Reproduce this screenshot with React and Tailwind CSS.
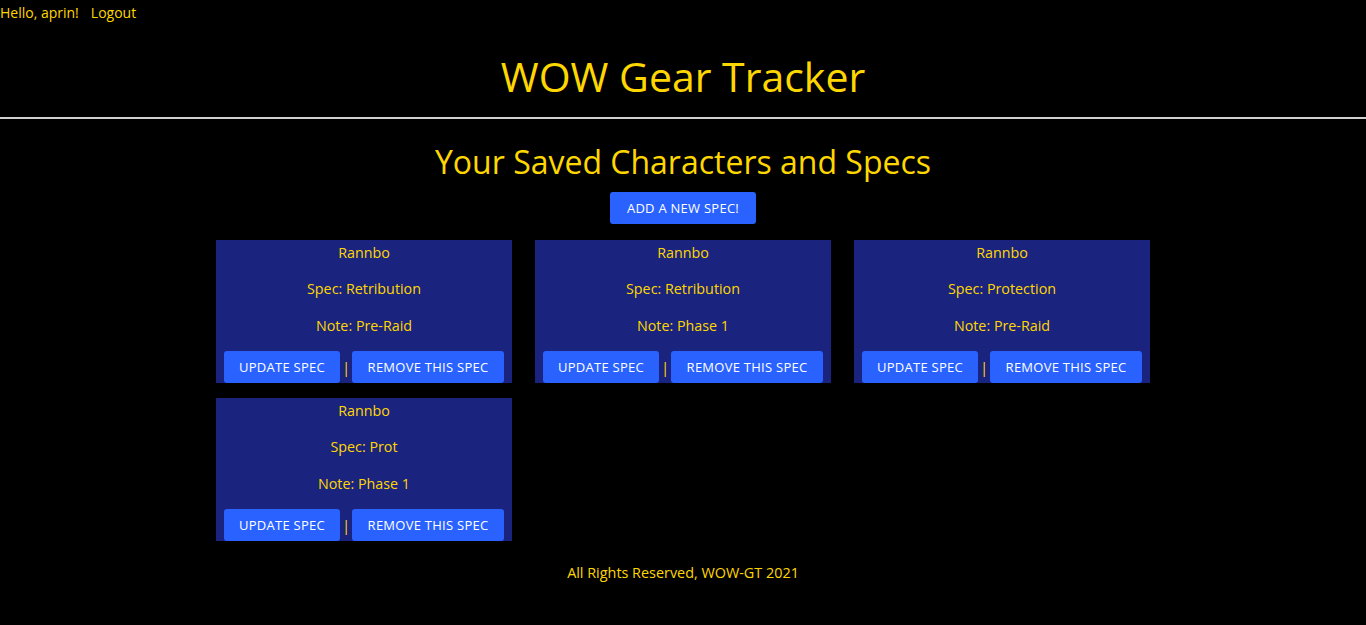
const specs = [
  { name: 'Rannbo', spec: 'Retribution', note: 'Pre-Raid' },
  { name: 'Rannbo', spec: 'Retribution', note: 'Phase 1' },
  { name: 'Rannbo', spec: 'Protection', note: 'Pre-Raid' },
  { name: 'Rannbo', spec: 'Prot', note: 'Phase 1' },
];

function SpecCard({ item }) {
  return (
    <div className="w-[296px] h-[143px] bg-[#1a237e] flex flex-col items-center px-2 text-[14.3px] text-[#ffd700]">
      <p className="h-6 leading-6 mt-px">{item.name}</p>
      <p className="h-6 leading-6 mt-3">Spec: {item.spec}</p>
      <p className="h-6 leading-6 mt-[13px]">Note: {item.note}</p>
      <div className="mt-auto flex items-center self-stretch">
        <button className="w-[116px] h-8 pt-px rounded-[3px] bg-[#2962ff] text-white text-[13px] uppercase tracking-[0.02em]">
          Update Spec
        </button>
        <span className="w-3 text-center text-[#ffd700] text-[15px] leading-none">|</span>
        <button className="w-[152px] h-8 pt-px rounded-[3px] bg-[#2962ff] text-white text-[13px] uppercase tracking-[0.02em]">
          Remove This Spec
        </button>
      </div>
    </div>
  );
}

export default function App() {
  return (
    <div className="min-h-[625px] bg-black text-[#ffd700] font-['Open_Sans',sans-serif]">
      {/* Nav */}
      <div className="h-6 flex items-center gap-3 text-[14px]">
        <span>Hello, aprin!</span>
        <span>Logout</span>
      </div>

      {/* Header */}
      <h1 className="mt-[26px] text-center text-[41px] leading-[53px]">WOW Gear Tracker</h1>
      <div className="mt-[14px] h-[2px] bg-[#d0d0d0]" />

      <div className="flex flex-col items-center">
        <h2 className="mt-[22px] text-[32px] leading-[41px]">Your Saved Characters and Specs</h2>
        <button className="mt-[10px] w-[146px] h-8 pt-px rounded-[3px] bg-[#2962ff] text-white text-[13px] uppercase tracking-[0.02em]">
          Add a new spec!
        </button>

        <div className="mt-4 grid grid-cols-[repeat(3,296px)] gap-x-[23px] gap-y-[15px]">
          {specs.map((s, i) => (
            <SpecCard key={i} item={s} />
          ))}
        </div>

        <p className="mt-[21px] text-[14.4px] leading-[22px]">All Rights Reserved, WOW-GT 2021</p>
      </div>
    </div>
  );
}
